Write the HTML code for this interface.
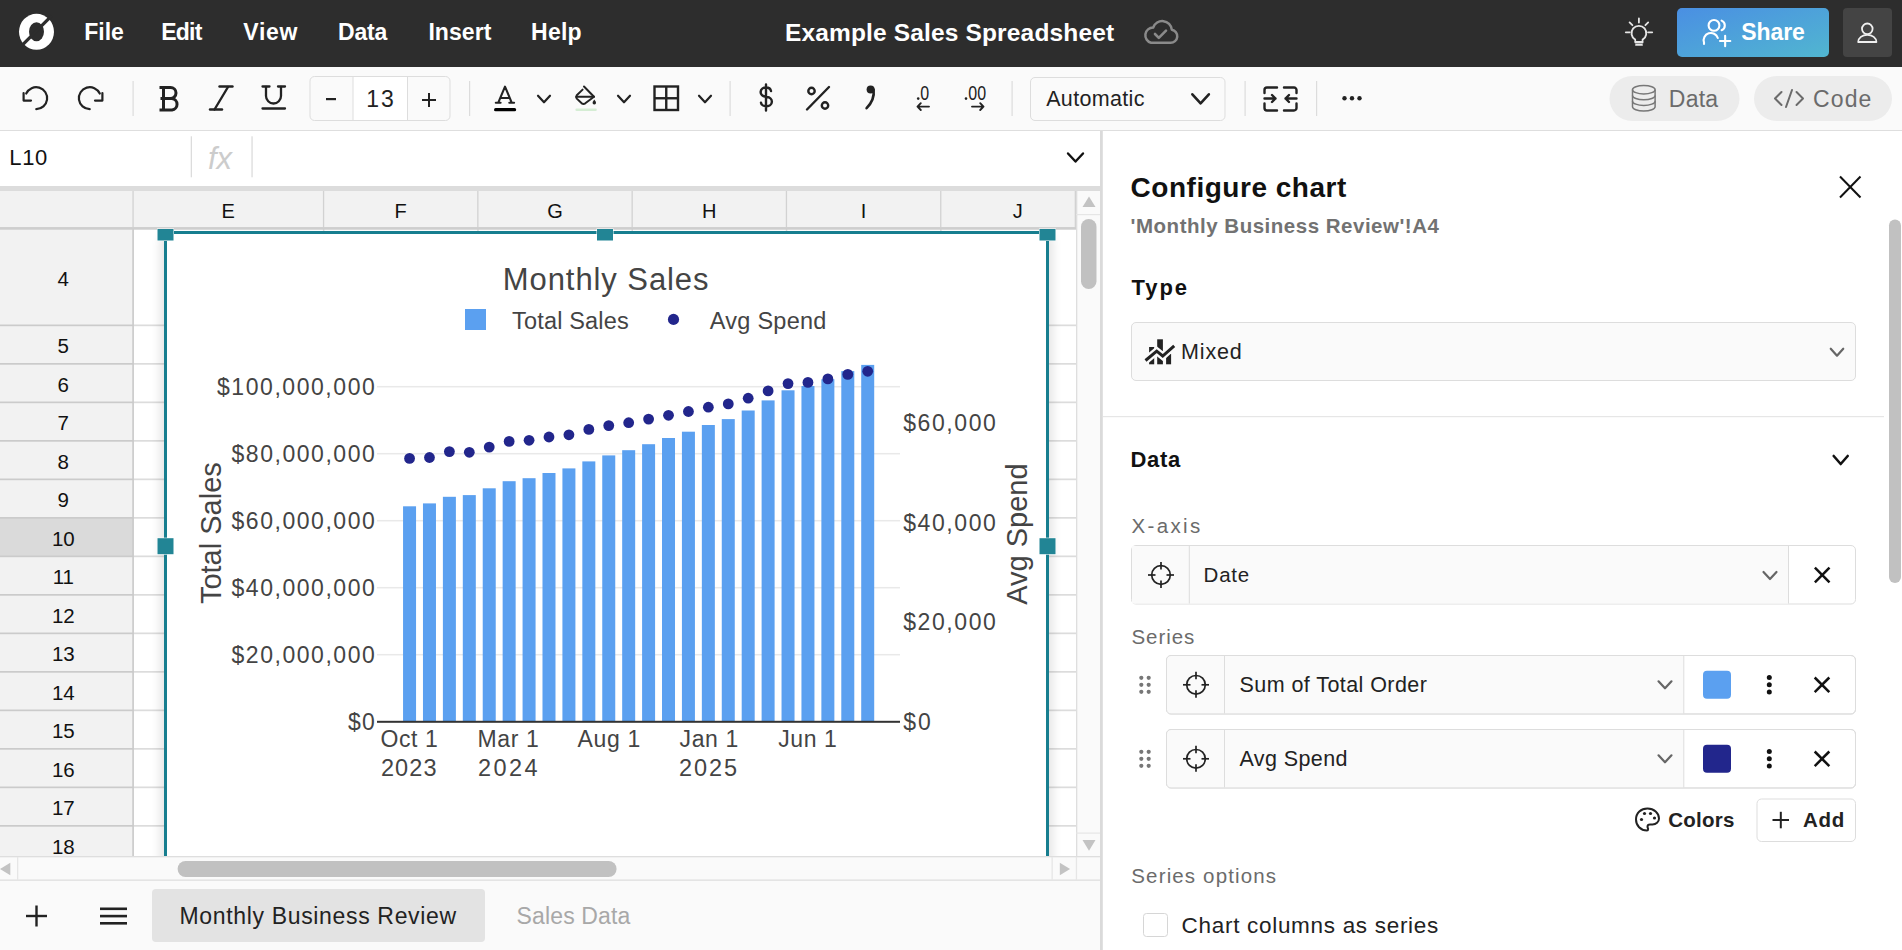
<!DOCTYPE html>
<html><head><meta charset="utf-8"><title>Example Sales Spreadsheet</title>
<style>
html,body{margin:0;padding:0;width:1902px;height:950px;overflow:hidden;background:#fff;}
svg{display:block;font-family:"Liberation Sans",sans-serif;}
</style></head><body>
<svg width="1902" height="950" viewBox="0 0 1902 950">
<rect x="0" y="0" width="1902" height="67" fill="#2d2d2d"/>
<g transform="translate(36.5,31.8)"><ellipse cx="0" cy="0" rx="17.5" ry="18" fill="#fff"/><ellipse cx="0" cy="0" rx="7.5" ry="9.5" fill="#2d2d2d"/><line x1="-14" y1="13" x2="15" y2="-16" stroke="#2d2d2d" stroke-width="3.2"/></g>
<path d="M1151,42.8 h19.5 a6.6,6.6 0 0 0 1.3,-13.1 a9.6,9.6 0 0 0 -18.6,-2.2 a7.8,7.8 0 0 0 -2.2,15.3 z" fill="none" stroke="#8a8a8a" stroke-width="2.5" stroke-linejoin="round"/><path d="M1155,34 l3.8,3.8 l7.2,-7.2" fill="none" stroke="#8a8a8a" stroke-width="2.6" stroke-linecap="round" stroke-linejoin="round"/>
<g fill="none" stroke="#e6e6e6" stroke-width="1.8" stroke-linecap="round"><path d="M1635.2,39.6 a7.4,7.4 0 1 1 7.4,0 v2.2 h-7.4 z" stroke-linejoin="round"/><line x1="1635.5" y1="42.6" x2="1642.5" y2="42.6"/><line x1="1636" y1="44.9" x2="1642" y2="44.9"/><line x1="1638.9" y1="18.5" x2="1638.9" y2="22.5"/><line x1="1625.8" y1="32.3" x2="1629.8" y2="32.3"/><line x1="1648" y1="32.3" x2="1652.2" y2="32.3"/><line x1="1629.6" y1="22.4" x2="1632.4" y2="25.2"/><line x1="1648.2" y1="22.4" x2="1645.4" y2="25.2"/></g>
<defs><linearGradient id="sg" x1="0" y1="0" x2="1" y2="1"><stop offset="0" stop-color="#4a8fe3"/><stop offset="1" stop-color="#51b6d0"/></linearGradient></defs>
<rect x="1677" y="8" width="152" height="49" rx="5" fill="url(#sg)"/>
<g fill="none" stroke="#fff" stroke-width="2.1" stroke-linecap="round"><circle cx="1714" cy="25.4" r="5.4"/><path d="M1704,44 v-1.5 a7.2,7.2 0 0 1 13.8,-4.5"/><path d="M1721.6,20.6 a5.2,5.2 0 0 1 0,9.6"/><line x1="1720" y1="41" x2="1730.3" y2="41"/><line x1="1725.15" y1="35.8" x2="1725.15" y2="46.2"/></g>
<rect x="1843" y="8" width="49" height="49" rx="4" fill="#444444"/>
<g fill="none" stroke="#f0f0f0" stroke-width="1.8"><circle cx="1867.3" cy="28.8" r="5.3"/><path d="M1858.2,42 a9.1,7.2 0 0 1 18.2,0 z" stroke-linejoin="round"/></g>
<rect x="0" y="67" width="1902" height="63.5" fill="#fafafa"/>
<rect x="0" y="130" width="1902" height="1" fill="#dedede"/>
<g fill="none" stroke="#222222" stroke-width="2.2" stroke-linecap="round" stroke-linejoin="round"><path d="M26.2,93.5 A11,11 0 1 1 36.3,109.2"/><path d="M23.6,93 L23.6,100.6 L31,100.6"/><path d="M99.8,93.5 A11,11 0 1 0 89.7,109.2"/><path d="M102.4,93 L102.4,100.6 L95,100.6"/></g>
<rect x="132.5" y="81" width="1.2" height="35" fill="#dcdcdc"/>
<path d="M160.5,87.5 h10 a5.5,5.5 0 0 1 0,11 h-10 M160.5,98.5 h11.5 a5.8,5.8 0 0 1 0,11.5 h-11.5 M163.5,87.5 v22.5 M159.5,87.5 h4 M159.5,110 h4" fill="none" stroke="#222222" stroke-width="3" stroke-linejoin="round"/>
<g fill="none" stroke="#222222" stroke-width="2.4" stroke-linecap="round"><line x1="228" y1="87" x2="214.5" y2="109.5"/><line x1="219.5" y1="86.5" x2="232.5" y2="86.5"/><line x1="210" y1="109.5" x2="222" y2="109.5"/></g>
<g fill="none" stroke="#222222" stroke-width="2.3" stroke-linecap="round"><path d="M266,87 v9 a7.5,7.5 0 0 0 15,0 v-9"/><line x1="262.5" y1="86.5" x2="269.5" y2="86.5"/><line x1="278" y1="86.5" x2="285" y2="86.5"/><line x1="262.5" y1="108.5" x2="285" y2="108.5"/></g>
<rect x="310" y="76.5" width="140" height="44" rx="4.5" fill="#fafafa" stroke="#dddddd" stroke-width="1"/>
<rect x="353" y="77" width="54.5" height="43" fill="#ffffff"/>
<rect x="352.5" y="77" width="1" height="43" fill="#dddddd"/><rect x="407" y="77" width="1" height="43" fill="#dddddd"/>
<rect x="326" y="98" width="10" height="2.2" fill="#222222"/>
<rect x="422" y="99" width="14" height="2" fill="#222222"/><rect x="428" y="93" width="2" height="14" fill="#222222"/>
<rect x="469" y="81" width="1.2" height="35" fill="#dcdcdc"/>
<path d="M498.4,102.3 L505,86.6 L511.6,102.3 M501.6,98 h7 M495.8,102.8 h4.8 M509.3,102.8 h4.8" fill="none" stroke="#222222" stroke-width="2.1" stroke-linecap="round" stroke-linejoin="round"/>
<rect x="494" y="108" width="22.2" height="3.3" rx="1.65" fill="#000"/>
<path d="M538.0,95.75 L544,102.25 L550.0,95.75" fill="none" stroke="#222222" stroke-width="2.2" stroke-linecap="round" stroke-linejoin="round"/>
<g fill="none" stroke="#222222" stroke-width="2" stroke-linejoin="round" stroke-linecap="round"><path d="M584,86.5 L594,96.7 L585.3,103.3 Q583.5,104.5 581.7,103.3 L576.8,98.6 Q575.6,96.8 576.8,95.2 L582.6,89.6"/><path d="M576.5,96.7 H594"/></g><path d="M594.3,99.6 q-2.2,2.6 -1.6,3.8 a1.8,1.8 0 0 0 3.2,0 q0.6,-1.2 -1.6,-3.8 z" fill="#222222"/>
<rect x="575.4" y="108.4" width="21.4" height="2.6" rx="1.3" fill="#d5edd4"/>
<path d="M618.0,95.75 L624,102.25 L630.0,95.75" fill="none" stroke="#222222" stroke-width="2.2" stroke-linecap="round" stroke-linejoin="round"/>
<g fill="none" stroke="#222222" stroke-width="2.4"><rect x="654.5" y="86.5" width="23.5" height="23.5"/><line x1="666.25" y1="86.5" x2="666.25" y2="110"/><line x1="654.5" y1="98.25" x2="678" y2="98.25"/></g>
<path d="M699.0,95.75 L705,102.25 L711.0,95.75" fill="none" stroke="#222222" stroke-width="2.2" stroke-linecap="round" stroke-linejoin="round"/>
<rect x="729.5" y="81" width="1.2" height="35" fill="#dcdcdc"/>
<path d="M771,91 a5,4.2 0 0 0 -5,-3.5 a5,4.5 0 0 0 -0.5,9.2 l1.5,0.3 a5,4.5 0 0 1 -0.5,9.2 a5,4 0 0 1 -5.5,-3.5 M766,84.5 v26" fill="none" stroke="#222222" stroke-width="2.4" stroke-linecap="round"/>
<g fill="none" stroke="#222222" stroke-width="2.4" stroke-linecap="round"><line x1="829" y1="87" x2="807" y2="109.5"/><circle cx="811.5" cy="91" r="3.2"/><circle cx="825" cy="105.5" r="3.2"/></g>
<circle cx="870.6" cy="89.6" r="4" fill="#222222"/><path d="M873.6,89.6 q1.3,10 -7,18.6" fill="none" stroke="#222222" stroke-width="2.6" stroke-linecap="round"/>
<circle cx="918.2" cy="98.6" r="1.3" fill="#222222"/>
<g fill="none" stroke="#222222" stroke-width="1.9" stroke-linecap="round" stroke-linejoin="round"><path d="M929,106.6 h-11.5 M920.8,103.2 l-3.3,3.4 l3.3,3.4"/></g>
<circle cx="966" cy="98.6" r="1.3" fill="#222222"/>
<g fill="none" stroke="#222222" stroke-width="1.9" stroke-linecap="round" stroke-linejoin="round"><path d="M972,106.6 h11.5 M980.2,103.2 l3.3,3.4 l-3.3,3.4"/></g>
<rect x="1011.5" y="81" width="1.2" height="35" fill="#dcdcdc"/>
<rect x="1030.5" y="77.5" width="194.5" height="43" rx="4.5" fill="#fafafa" stroke="#dddddd" stroke-width="1"/>
<path d="M1192.35,94.3 L1200.6,103.3 L1208.85,94.3" fill="none" stroke="#222222" stroke-width="2.6" stroke-linecap="round" stroke-linejoin="round"/>
<rect x="1244.5" y="81" width="1.2" height="35" fill="#dcdcdc"/>
<g fill="none" stroke="#222222" stroke-width="2.4" stroke-linecap="round" stroke-linejoin="round"><path d="M1264.5,93 v-3 a2.5,2.5 0 0 1 2.5,-2.5 h10 M1264.5,103.5 v4.5 a2.5,2.5 0 0 0 2.5,2.5 h10"/><path d="M1296.5,93 v-3 a2.5,2.5 0 0 0 -2.5,-2.5 h-10 M1296.5,103.5 v4.5 a2.5,2.5 0 0 1 -2.5,2.5 h-10"/><path d="M1264.5,98.5 h11 M1272,95 l3.5,3.5 l-3.5,3.5"/><path d="M1296.5,98.5 h-11 M1289,95 l-3.5,3.5 l3.5,3.5"/></g>
<rect x="1316" y="81" width="1.2" height="35" fill="#dcdcdc"/>
<g fill="#222222"><circle cx="1344.5" cy="98.2" r="2.2"/><circle cx="1352" cy="98.2" r="2.2"/><circle cx="1359.5" cy="98.2" r="2.2"/></g>
<rect x="1609.5" y="76" width="130" height="45" rx="22.5" fill="#ececec"/>
<rect x="1754" y="76" width="138" height="45" rx="22.5" fill="#ececec"/>
<g fill="none" stroke="#777" stroke-width="1.5"><ellipse cx="1643.8" cy="89.7" rx="11.3" ry="4.2"/><path d="M1632.5,89.7 v17 a11.3,4.4 0 0 0 22.6,0 v-17"/><path d="M1632.5,95.5 a11.3,4.2 0 0 0 22.6,0"/><path d="M1632.5,101.2 a11.3,4.2 0 0 0 22.6,0"/></g>
<g fill="none" stroke="#6b6b6b" stroke-width="2" stroke-linecap="round" stroke-linejoin="round"><path d="M1781.5,92 l-6.5,6.5 l6.5,6.5"/><path d="M1796.5,92 l6.5,6.5 l-6.5,6.5"/><line x1="1792" y1="90" x2="1786" y2="107"/></g>
<rect x="0" y="131" width="1100" height="55" fill="#ffffff"/>
<rect x="190.7" y="136.3" width="1.3" height="41" fill="#dcdcdc"/><rect x="251.4" y="136.3" width="1.3" height="41" fill="#dcdcdc"/>
<path d="M1068.0,153.5 L1075.5,161.5 L1083.0,153.5" fill="none" stroke="#111" stroke-width="2.4" stroke-linecap="round" stroke-linejoin="round"/>
<rect x="0" y="186" width="1100" height="5" fill="#dcdcdc"/>
<rect x="0" y="191" width="1077" height="38" fill="#f2f2f2"/>
<rect x="0" y="227.3" width="1077" height="2.4" fill="#cecece"/>
<rect x="132.4" y="191" width="1.3" height="38" fill="#d2d2d2"/>
<rect x="322.9" y="191" width="1.3" height="38" fill="#d2d2d2"/>
<rect x="477.2" y="191" width="1.3" height="38" fill="#d2d2d2"/>
<rect x="631.5" y="191" width="1.3" height="38" fill="#d2d2d2"/>
<rect x="785.8" y="191" width="1.3" height="38" fill="#d2d2d2"/>
<rect x="940.1" y="191" width="1.3" height="38" fill="#d2d2d2"/>
<rect x="1074.7" y="191" width="1.3" height="38" fill="#d2d2d2"/>
<rect x="0" y="229" width="133" height="627" fill="#f2f2f2"/>
<rect x="133.5" y="229" width="943" height="627" fill="#ffffff"/>
<rect x="0" y="517.5" width="133" height="38.5" fill="#dadada"/>
<rect x="0" y="324.5" width="133" height="1.7" fill="#cbcbcb"/>
<rect x="133" y="324.5" width="943" height="1.7" fill="#dcdcdc"/>
<rect x="0" y="363.0" width="133" height="1.7" fill="#cbcbcb"/>
<rect x="133" y="363.0" width="943" height="1.7" fill="#dcdcdc"/>
<rect x="0" y="401.5" width="133" height="1.7" fill="#cbcbcb"/>
<rect x="133" y="401.5" width="943" height="1.7" fill="#dcdcdc"/>
<rect x="0" y="440.0" width="133" height="1.7" fill="#cbcbcb"/>
<rect x="133" y="440.0" width="943" height="1.7" fill="#dcdcdc"/>
<rect x="0" y="478.5" width="133" height="1.7" fill="#cbcbcb"/>
<rect x="133" y="478.5" width="943" height="1.7" fill="#dcdcdc"/>
<rect x="0" y="517.0" width="133" height="1.7" fill="#cbcbcb"/>
<rect x="133" y="517.0" width="943" height="1.7" fill="#dcdcdc"/>
<rect x="0" y="555.5" width="133" height="1.7" fill="#cbcbcb"/>
<rect x="133" y="555.5" width="943" height="1.7" fill="#dcdcdc"/>
<rect x="0" y="594.0" width="133" height="1.7" fill="#cbcbcb"/>
<rect x="133" y="594.0" width="943" height="1.7" fill="#dcdcdc"/>
<rect x="0" y="632.5" width="133" height="1.7" fill="#cbcbcb"/>
<rect x="133" y="632.5" width="943" height="1.7" fill="#dcdcdc"/>
<rect x="0" y="671.0" width="133" height="1.7" fill="#cbcbcb"/>
<rect x="133" y="671.0" width="943" height="1.7" fill="#dcdcdc"/>
<rect x="0" y="709.5" width="133" height="1.7" fill="#cbcbcb"/>
<rect x="133" y="709.5" width="943" height="1.7" fill="#dcdcdc"/>
<rect x="0" y="748.0" width="133" height="1.7" fill="#cbcbcb"/>
<rect x="133" y="748.0" width="943" height="1.7" fill="#dcdcdc"/>
<rect x="0" y="786.5" width="133" height="1.7" fill="#cbcbcb"/>
<rect x="133" y="786.5" width="943" height="1.7" fill="#dcdcdc"/>
<rect x="0" y="825.0" width="133" height="1.7" fill="#cbcbcb"/>
<rect x="133" y="825.0" width="943" height="1.7" fill="#dcdcdc"/>
<rect x="132.3" y="229" width="1.6" height="627" fill="#c9c9c9"/>
<rect x="322.9" y="229" width="1.5" height="627" fill="#dcdcdc"/>
<rect x="477.2" y="229" width="1.5" height="627" fill="#dcdcdc"/>
<rect x="631.5" y="229" width="1.5" height="627" fill="#dcdcdc"/>
<rect x="785.8" y="229" width="1.5" height="627" fill="#dcdcdc"/>
<rect x="940.1" y="229" width="1.5" height="627" fill="#dcdcdc"/>
<rect x="0" y="227.3" width="1076" height="2.4" fill="#cecece"/>
<rect x="1076" y="191" width="24" height="666" fill="#fafafa"/>
<rect x="1076" y="191" width="1.3" height="666" fill="#dedede"/>
<rect x="1076" y="214" width="24" height="1.2" fill="#e6e6e6"/><rect x="1076" y="832.5" width="24" height="1.2" fill="#e6e6e6"/>
<path d="M1082.5,207 h13 l-6.5,-10.5 z" fill="#c3c3c3"/><path d="M1082.5,840 h13 l-6.5,10.8 z" fill="#c3c3c3"/>
<rect x="1081" y="219" width="15.5" height="70" rx="7.75" fill="#c1c1c1"/>
<rect x="0" y="856.5" width="1100" height="24" fill="#fafafa"/>
<rect x="0" y="856" width="1100" height="1.3" fill="#dedede"/><rect x="0" y="879.5" width="1100" height="1.3" fill="#dedede"/>
<rect x="17" y="857" width="1.3" height="23" fill="#e6e6e6"/><rect x="1051.5" y="857" width="1.3" height="23" fill="#e6e6e6"/><rect x="1075.8" y="857" width="1.3" height="23" fill="#e6e6e6"/>
<path d="M10.3,862.8 v12.4 l-10.3,-6.2 z" fill="#c3c3c3"/><path d="M1059.8,862.8 v12.4 l10.3,-6.2 z" fill="#c3c3c3"/>
<rect x="177.6" y="861" width="439" height="16" rx="8" fill="#c1c1c1"/>
<rect x="322.9" y="853" width="1.3" height="3" fill="#e2e2e2"/>
<rect x="477.2" y="853" width="1.3" height="3" fill="#e2e2e2"/>
<rect x="631.5" y="853" width="1.3" height="3" fill="#e2e2e2"/>
<rect x="785.8" y="853" width="1.3" height="3" fill="#e2e2e2"/>
<rect x="940.1" y="853" width="1.3" height="3" fill="#e2e2e2"/>
<rect x="0" y="881" width="1100" height="69" fill="#fafafa"/>
<g fill="#222"><rect x="26" y="914.8" width="21" height="2.4"/><rect x="35.3" y="905.5" width="2.4" height="21"/></g>
<g fill="#222"><rect x="100" y="907.5" width="27" height="2.6"/><rect x="100" y="914.8" width="27" height="2.6"/><rect x="100" y="922" width="27" height="2.6"/></g>
<rect x="152" y="889" width="333" height="53" rx="4" fill="#e3e3e3"/>
<defs><filter id="csh" x="-5%" y="-5%" width="110%" height="110%"><feGaussianBlur stdDeviation="5"/></filter><clipPath id="gridclip"><rect x="133.5" y="229" width="942" height="627"/></clipPath></defs>
<g clip-path="url(#gridclip)">
<rect x="160" y="236" width="893" height="640" fill="#000" opacity="0.10" filter="url(#csh)"/>
<rect x="164" y="231" width="885" height="640" fill="#ffffff"/>
<rect x="165.5" y="232.5" width="882" height="640" fill="none" stroke="#177e8f" stroke-width="3"/>
</g>
<rect x="377" y="385.95" width="523" height="1.5" fill="#e9e9e9"/>
<rect x="377" y="452.95" width="523" height="1.5" fill="#e9e9e9"/>
<rect x="377" y="519.95" width="523" height="1.5" fill="#e9e9e9"/>
<rect x="377" y="586.95" width="523" height="1.5" fill="#e9e9e9"/>
<rect x="377" y="653.95" width="523" height="1.5" fill="#e9e9e9"/>
<rect x="403.05" y="506.3" width="13" height="215.50" fill="#5ba0f0"/>
<rect x="422.97" y="503.4" width="13" height="218.40" fill="#5ba0f0"/>
<rect x="442.89" y="496.8" width="13" height="225.00" fill="#5ba0f0"/>
<rect x="462.81" y="495.1" width="13" height="226.70" fill="#5ba0f0"/>
<rect x="482.73" y="488.3" width="13" height="233.50" fill="#5ba0f0"/>
<rect x="502.65" y="481.2" width="13" height="240.60" fill="#5ba0f0"/>
<rect x="522.57" y="478.2" width="13" height="243.60" fill="#5ba0f0"/>
<rect x="542.49" y="473.0" width="13" height="248.80" fill="#5ba0f0"/>
<rect x="562.41" y="468.4" width="13" height="253.40" fill="#5ba0f0"/>
<rect x="582.33" y="461.4" width="13" height="260.40" fill="#5ba0f0"/>
<rect x="602.25" y="455.4" width="13" height="266.40" fill="#5ba0f0"/>
<rect x="622.17" y="450.2" width="13" height="271.60" fill="#5ba0f0"/>
<rect x="642.09" y="444.2" width="13" height="277.60" fill="#5ba0f0"/>
<rect x="662.01" y="438.0" width="13" height="283.80" fill="#5ba0f0"/>
<rect x="681.93" y="431.7" width="13" height="290.10" fill="#5ba0f0"/>
<rect x="701.85" y="425.0" width="13" height="296.80" fill="#5ba0f0"/>
<rect x="721.77" y="419.1" width="13" height="302.70" fill="#5ba0f0"/>
<rect x="741.69" y="410.5" width="13" height="311.30" fill="#5ba0f0"/>
<rect x="761.61" y="400.4" width="13" height="321.40" fill="#5ba0f0"/>
<rect x="781.53" y="390.3" width="13" height="331.50" fill="#5ba0f0"/>
<rect x="801.45" y="386.0" width="13" height="335.80" fill="#5ba0f0"/>
<rect x="821.37" y="379.2" width="13" height="342.60" fill="#5ba0f0"/>
<rect x="841.29" y="371.1" width="13" height="350.70" fill="#5ba0f0"/>
<rect x="861.21" y="364.9" width="13" height="356.90" fill="#5ba0f0"/>
<rect x="377" y="720.8" width="523" height="2" fill="#333333"/>
<circle cx="409.55" cy="458.4" r="5.4" fill="#22268c"/>
<circle cx="429.47" cy="457.5" r="5.4" fill="#22268c"/>
<circle cx="449.39" cy="451.6" r="5.4" fill="#22268c"/>
<circle cx="469.31" cy="452.3" r="5.4" fill="#22268c"/>
<circle cx="489.23" cy="447.1" r="5.4" fill="#22268c"/>
<circle cx="509.15" cy="441.4" r="5.4" fill="#22268c"/>
<circle cx="529.07" cy="440.3" r="5.4" fill="#22268c"/>
<circle cx="548.99" cy="437.0" r="5.4" fill="#22268c"/>
<circle cx="568.91" cy="434.8" r="5.4" fill="#22268c"/>
<circle cx="588.83" cy="429.4" r="5.4" fill="#22268c"/>
<circle cx="608.75" cy="425.6" r="5.4" fill="#22268c"/>
<circle cx="628.67" cy="422.7" r="5.4" fill="#22268c"/>
<circle cx="648.59" cy="419.1" r="5.4" fill="#22268c"/>
<circle cx="668.51" cy="415.3" r="5.4" fill="#22268c"/>
<circle cx="688.43" cy="411.5" r="5.4" fill="#22268c"/>
<circle cx="708.35" cy="407.2" r="5.4" fill="#22268c"/>
<circle cx="728.27" cy="403.9" r="5.4" fill="#22268c"/>
<circle cx="748.19" cy="398.2" r="5.4" fill="#22268c"/>
<circle cx="768.11" cy="390.9" r="5.4" fill="#22268c"/>
<circle cx="788.03" cy="383.6" r="5.4" fill="#22268c"/>
<circle cx="807.95" cy="382.4" r="5.4" fill="#22268c"/>
<circle cx="827.87" cy="378.9" r="5.4" fill="#22268c"/>
<circle cx="847.79" cy="374.4" r="5.4" fill="#22268c"/>
<circle cx="867.71" cy="371.3" r="5.4" fill="#22268c"/>
<rect x="465" y="309" width="21" height="21" fill="#5ba0f0"/>
<circle cx="673.5" cy="319.4" r="5.6" fill="#22268c"/>
<rect x="157.0" y="228.5" width="17" height="12.5" fill="#ffffff"/>
<rect x="157.5" y="229" width="16" height="11.5" fill="#228595"/>
<rect x="596.5" y="228.5" width="17" height="12.5" fill="#ffffff"/>
<rect x="597" y="229" width="16" height="11.5" fill="#228595"/>
<rect x="1039.0" y="228.5" width="17" height="12.5" fill="#ffffff"/>
<rect x="1039.5" y="229" width="16" height="11.5" fill="#228595"/>
<rect x="157.0" y="537.7" width="17" height="17.0" fill="#ffffff"/>
<rect x="157.5" y="538.2" width="16" height="16.0" fill="#228595"/>
<rect x="1039.0" y="537.7" width="17" height="17.0" fill="#ffffff"/>
<rect x="1039.5" y="538.2" width="16" height="16.0" fill="#228595"/>
<rect x="1100" y="131" width="802" height="819" fill="#ffffff"/>
<rect x="1100" y="131" width="2.8" height="819" fill="#dadada"/>
<g stroke="#111" stroke-width="2" stroke-linecap="butt"><line x1="1840" y1="176.5" x2="1860.5" y2="197.5"/><line x1="1860.5" y1="176.5" x2="1840" y2="197.5"/></g>
<rect x="1889" y="219.5" width="12" height="363.5" rx="6" fill="#c1c1c1"/>
<rect x="1131.5" y="322.5" width="724" height="58" rx="4.5" fill="#fafafa" stroke="#dddddd" stroke-width="1"/>
<g fill="#222"><rect x="1149.1" y="347" width="5.1" height="17.3"/><rect x="1157.2" y="339.3" width="5.7" height="25"/><rect x="1166.1" y="353.9" width="5" height="10.4"/></g><path d="M1145.5,360.5 L1156.7,351.2 L1162.7,356 L1174.2,345.8" fill="none" stroke="#fafafa" stroke-width="7.5" stroke-linejoin="miter"/><path d="M1145.5,360.5 L1156.7,351.2 L1162.7,356 L1174.2,345.8" fill="none" stroke="#222" stroke-width="3" stroke-linejoin="miter"/>
<path d="M1830.75,348.7 L1837,355.7 L1843.25,348.7" fill="none" stroke="#666" stroke-width="2.2" stroke-linecap="round" stroke-linejoin="round"/>
<rect x="1103" y="416" width="781" height="1.2" fill="#e6e6e6"/>
<path d="M1833.7,456.0 L1840.7,464.0 L1847.7,456.0" fill="none" stroke="#111" stroke-width="2.6" stroke-linecap="round" stroke-linejoin="round"/>
<rect x="1131.5" y="545.5" width="724" height="58.5" rx="4.5" fill="#ffffff" stroke="#dddddd" stroke-width="1"/>
<rect x="1132" y="546" width="656" height="57.5" fill="#fafafa"/>
<path d="M1136,546 h-0 a4,4 0 0 0 -4,4 v49.5 a4,4 0 0 0 4,4 z" fill="#fafafa"/>
<rect x="1188.8" y="546" width="1" height="57.5" fill="#dddddd"/><rect x="1788" y="546" width="1" height="57.5" fill="#dddddd"/>
<g fill="none" stroke="#222" stroke-width="1.7"><circle cx="1161" cy="575" r="9.3"/><line x1="1161" y1="562" x2="1161" y2="569.5"/><line x1="1161" y1="580.5" x2="1161" y2="588"/><line x1="1148" y1="575" x2="1155.5" y2="575"/><line x1="1166.5" y1="575" x2="1174" y2="575"/></g>
<path d="M1763.5,572.0 L1770,579.0 L1776.5,572.0" fill="none" stroke="#666" stroke-width="2.2" stroke-linecap="round" stroke-linejoin="round"/>
<g stroke="#111" stroke-width="2.5"><line x1="1814.9" y1="567.7" x2="1829.5" y2="582.3"/><line x1="1829.5" y1="567.7" x2="1814.9" y2="582.3"/></g>
<rect x="1166.5" y="655.5" width="689" height="58.5" rx="4.5" fill="#ffffff" stroke="#dddddd" stroke-width="1"/>
<rect x="1167" y="656.0" width="516.5" height="57.5" fill="#fafafa"/>
<rect x="1224" y="656.0" width="1" height="57.5" fill="#dddddd"/><rect x="1683.3" y="656.0" width="1" height="57.5" fill="#dddddd"/>
<rect x="1166.5" y="655.5" width="689" height="58.5" rx="4.5" fill="none" stroke="#dddddd" stroke-width="1"/>
<g fill="#777"><circle cx="1141.3" cy="677.8" r="2.1"/><circle cx="1141.3" cy="684.8" r="2.1"/><circle cx="1141.3" cy="691.8" r="2.1"/><circle cx="1148.7" cy="677.8" r="2.1"/><circle cx="1148.7" cy="684.8" r="2.1"/><circle cx="1148.7" cy="691.8" r="2.1"/></g>
<g fill="none" stroke="#222" stroke-width="1.7"><circle cx="1196" cy="684.8" r="9.3"/><line x1="1196" y1="671.8" x2="1196" y2="679.3"/><line x1="1196" y1="690.3" x2="1196" y2="697.8"/><line x1="1183" y1="684.8" x2="1190.5" y2="684.8"/><line x1="1201.5" y1="684.8" x2="1209" y2="684.8"/></g>
<path d="M1658.5,681.3 L1665,688.3 L1671.5,681.3" fill="none" stroke="#666" stroke-width="2.2" stroke-linecap="round" stroke-linejoin="round"/>
<rect x="1703" y="670.8" width="28" height="28" rx="4" fill="#5ba0f0"/>
<g fill="#111"><circle cx="1769.3" cy="677.5999999999999" r="2.5"/><circle cx="1769.3" cy="684.8" r="2.5"/><circle cx="1769.3" cy="692.0" r="2.5"/></g>
<g stroke="#111" stroke-width="2.5"><line x1="1814.7" y1="677.5" x2="1829.3" y2="692.0999999999999"/><line x1="1829.3" y1="677.5" x2="1814.7" y2="692.0999999999999"/></g>
<rect x="1166.5" y="729.5" width="689" height="58.5" rx="4.5" fill="#ffffff" stroke="#dddddd" stroke-width="1"/>
<rect x="1167" y="730.0" width="516.5" height="57.5" fill="#fafafa"/>
<rect x="1224" y="730.0" width="1" height="57.5" fill="#dddddd"/><rect x="1683.3" y="730.0" width="1" height="57.5" fill="#dddddd"/>
<rect x="1166.5" y="729.5" width="689" height="58.5" rx="4.5" fill="none" stroke="#dddddd" stroke-width="1"/>
<g fill="#777"><circle cx="1141.3" cy="751.8" r="2.1"/><circle cx="1141.3" cy="758.8" r="2.1"/><circle cx="1141.3" cy="765.8" r="2.1"/><circle cx="1148.7" cy="751.8" r="2.1"/><circle cx="1148.7" cy="758.8" r="2.1"/><circle cx="1148.7" cy="765.8" r="2.1"/></g>
<g fill="none" stroke="#222" stroke-width="1.7"><circle cx="1196" cy="758.8" r="9.3"/><line x1="1196" y1="745.8" x2="1196" y2="753.3"/><line x1="1196" y1="764.3" x2="1196" y2="771.8"/><line x1="1183" y1="758.8" x2="1190.5" y2="758.8"/><line x1="1201.5" y1="758.8" x2="1209" y2="758.8"/></g>
<path d="M1658.5,755.3 L1665,762.3 L1671.5,755.3" fill="none" stroke="#666" stroke-width="2.2" stroke-linecap="round" stroke-linejoin="round"/>
<rect x="1703" y="744.8" width="28" height="28" rx="4" fill="#22268c"/>
<g fill="#111"><circle cx="1769.3" cy="751.5999999999999" r="2.5"/><circle cx="1769.3" cy="758.8" r="2.5"/><circle cx="1769.3" cy="766.0" r="2.5"/></g>
<g stroke="#111" stroke-width="2.5"><line x1="1814.7" y1="751.5" x2="1829.3" y2="766.0999999999999"/><line x1="1829.3" y1="751.5" x2="1814.7" y2="766.0999999999999"/></g>
<g fill="none" stroke="#222" stroke-width="2"><path d="M1647,830.5 c-6.5,0 -11,-5 -11,-11 c0,-6.5 5,-11 11.5,-11 c6.5,0 11.5,4.5 11.5,10 c0,3.5 -3,6 -6.5,6 h-2.5 c-1.5,0 -2.5,1 -2.5,2.3 c0,0.8 0.6,1.3 0.6,2.2 c0,1 -0.8,1.5 -1.1,1.5 z" stroke-linejoin="round"/></g><g fill="#222"><circle cx="1641.5" cy="819.5" r="1.6"/><circle cx="1644.5" cy="813.5" r="1.6"/><circle cx="1650.5" cy="813.5" r="1.6"/><circle cx="1654.5" cy="818" r="1.6"/></g>
<rect x="1757" y="799" width="98.5" height="42.5" rx="4.5" fill="#ffffff" stroke="#dddddd" stroke-width="1"/>
<g fill="#222"><rect x="1772.5" y="819" width="16.5" height="2"/><rect x="1779.8" y="811.8" width="2" height="16.5"/></g>
<rect x="1143.5" y="913.5" width="24" height="23" rx="3" fill="#ffffff" stroke="#d6d6d6" stroke-width="1"/>
<text x="84.20" y="40.00" style="font-size:23px;font-weight:700" fill="#ffffff" textLength="39.69" lengthAdjust="spacing" >File</text>
<text x="161.20" y="40.00" style="font-size:23px;font-weight:700" fill="#ffffff" textLength="41.16" lengthAdjust="spacing" >Edit</text>
<text x="243.30" y="40.00" style="font-size:23px;font-weight:700" fill="#ffffff" textLength="53.99" lengthAdjust="spacing" >View</text>
<text x="337.90" y="40.00" style="font-size:23px;font-weight:700" fill="#ffffff" textLength="49.49" lengthAdjust="spacing" >Data</text>
<text x="428.40" y="40.00" style="font-size:23px;font-weight:700" fill="#ffffff" textLength="62.96" lengthAdjust="spacing" >Insert</text>
<text x="531.00" y="40.00" style="font-size:23px;font-weight:700" fill="#ffffff" textLength="50.65" lengthAdjust="spacing" >Help</text>
<text x="784.90" y="41.10" style="font-size:24.5px;font-weight:700" fill="#ffffff" textLength="329.26" lengthAdjust="spacing" >Example Sales Spreadsheet</text>
<text x="1741.30" y="39.70" style="font-size:23px;font-weight:700" fill="#ffffff" textLength="63.49" lengthAdjust="spacing" >Share</text>
<text x="366.30" y="106.50" style="font-size:23px;font-weight:400" fill="#222" textLength="27.49" lengthAdjust="spacing" >13</text>
<text x="0.00" y="0.00" style="font-size:19.5px;font-weight:400" fill="#222" transform="translate(920.3,100) scale(0.82,1)">0</text>
<text x="0.00" y="0.00" style="font-size:19.5px;font-weight:400" fill="#222" transform="translate(968.3,100) scale(0.82,1)">00</text>
<text x="1046.20" y="106.30" style="font-size:21.5px;font-weight:400" fill="#222" textLength="98.25" lengthAdjust="spacing" >Automatic</text>
<text x="1668.80" y="107.00" style="font-size:23px;font-weight:400" fill="#6b6b6b" textLength="49.29" lengthAdjust="spacing" >Data</text>
<text x="1813.00" y="107.00" style="font-size:23px;font-weight:400" fill="#6b6b6b" textLength="58.39" lengthAdjust="spacing" >Code</text>
<text x="9.30" y="165.00" style="font-size:22px;font-weight:400" fill="#111" textLength="37.94" lengthAdjust="spacing" >L10</text>
<text x="208.00" y="168.60" style="font-size:31px;font-weight:400;font-style:italic" fill="#cccccc" >fx</text>
<text x="228.25" y="218.10" style="font-size:20px;font-weight:400" fill="#111" text-anchor="middle" >E</text>
<text x="400.65" y="218.10" style="font-size:20px;font-weight:400" fill="#111" text-anchor="middle" >F</text>
<text x="554.95" y="218.10" style="font-size:20px;font-weight:400" fill="#111" text-anchor="middle" >G</text>
<text x="709.25" y="218.10" style="font-size:20px;font-weight:400" fill="#111" text-anchor="middle" >H</text>
<text x="863.55" y="218.10" style="font-size:20px;font-weight:400" fill="#111" text-anchor="middle" >I</text>
<text x="1017.85" y="218.10" style="font-size:20px;font-weight:400" fill="#111" text-anchor="middle" >J</text>
<text x="63.30" y="285.80" style="font-size:20.5px;font-weight:400" fill="#111" text-anchor="middle" >4</text>
<text x="63.30" y="353.05" style="font-size:20.5px;font-weight:400" fill="#111" text-anchor="middle" >5</text>
<text x="63.30" y="391.55" style="font-size:20.5px;font-weight:400" fill="#111" text-anchor="middle" >6</text>
<text x="63.30" y="430.05" style="font-size:20.5px;font-weight:400" fill="#111" text-anchor="middle" >7</text>
<text x="63.30" y="468.55" style="font-size:20.5px;font-weight:400" fill="#111" text-anchor="middle" >8</text>
<text x="63.30" y="507.05" style="font-size:20.5px;font-weight:400" fill="#111" text-anchor="middle" >9</text>
<text x="63.30" y="545.55" style="font-size:20.5px;font-weight:400" fill="#111" text-anchor="middle" >10</text>
<text x="63.30" y="584.05" style="font-size:20.5px;font-weight:400" fill="#111" text-anchor="middle" >11</text>
<text x="63.30" y="622.55" style="font-size:20.5px;font-weight:400" fill="#111" text-anchor="middle" >12</text>
<text x="63.30" y="661.05" style="font-size:20.5px;font-weight:400" fill="#111" text-anchor="middle" >13</text>
<text x="63.30" y="699.55" style="font-size:20.5px;font-weight:400" fill="#111" text-anchor="middle" >14</text>
<text x="63.30" y="738.05" style="font-size:20.5px;font-weight:400" fill="#111" text-anchor="middle" >15</text>
<text x="63.30" y="776.55" style="font-size:20.5px;font-weight:400" fill="#111" text-anchor="middle" >16</text>
<text x="63.30" y="815.05" style="font-size:20.5px;font-weight:400" fill="#111" text-anchor="middle" >17</text>
<text x="63.30" y="853.55" style="font-size:20.5px;font-weight:400" fill="#111" text-anchor="middle" >18</text>
<text x="179.50" y="924.20" style="font-size:23px;font-weight:400" fill="#222" textLength="276.61" lengthAdjust="spacing" >Monthly Business Review</text>
<text x="516.50" y="924.20" style="font-size:23px;font-weight:400" fill="#a8a8a8" textLength="113.89" lengthAdjust="spacing" >Sales Data</text>
<text x="502.80" y="290.00" style="font-size:31px;font-weight:400" fill="#444444" textLength="205.70" lengthAdjust="spacing" >Monthly Sales</text>
<text x="512.00" y="329.00" style="font-size:23.5px;font-weight:400" fill="#444444" textLength="116.75" lengthAdjust="spacing" >Total Sales</text>
<text x="709.80" y="329.00" style="font-size:23.5px;font-weight:400" fill="#444444" textLength="116.57" lengthAdjust="spacing" >Avg Spend</text>
<text x="217.00" y="394.60" style="font-size:23px;font-weight:400" fill="#444444" textLength="157.79" lengthAdjust="spacing" >$100,000,000</text>
<text x="231.50" y="461.60" style="font-size:23px;font-weight:400" fill="#444444" textLength="143.29" lengthAdjust="spacing" >$80,000,000</text>
<text x="231.50" y="528.60" style="font-size:23px;font-weight:400" fill="#444444" textLength="143.29" lengthAdjust="spacing" >$60,000,000</text>
<text x="231.50" y="595.60" style="font-size:23px;font-weight:400" fill="#444444" textLength="143.29" lengthAdjust="spacing" >$40,000,000</text>
<text x="231.50" y="662.60" style="font-size:23px;font-weight:400" fill="#444444" textLength="143.29" lengthAdjust="spacing" >$20,000,000</text>
<text x="348.00" y="729.60" style="font-size:23px;font-weight:400" fill="#444444" textLength="26.79" lengthAdjust="spacing" >$0</text>
<text x="903.20" y="431.20" style="font-size:23px;font-weight:400" fill="#444444" textLength="92.59" lengthAdjust="spacing" >$60,000</text>
<text x="903.20" y="530.70" style="font-size:23px;font-weight:400" fill="#444444" textLength="92.59" lengthAdjust="spacing" >$40,000</text>
<text x="903.20" y="630.20" style="font-size:23px;font-weight:400" fill="#444444" textLength="92.59" lengthAdjust="spacing" >$20,000</text>
<text x="903.20" y="729.70" style="font-size:23px;font-weight:400" fill="#444444" textLength="27.59" lengthAdjust="spacing" >$0</text>
<text x="380.40" y="746.60" style="font-size:23px;font-weight:400" fill="#444444" textLength="57.39" lengthAdjust="spacing" >Oct 1</text>
<text x="380.90" y="775.60" style="font-size:23.5px;font-weight:400" fill="#444444" textLength="55.67" lengthAdjust="spacing" >2023</text>
<text x="477.50" y="746.60" style="font-size:23px;font-weight:400" fill="#444444" textLength="61.29" lengthAdjust="spacing" >Mar 1</text>
<text x="478.00" y="775.60" style="font-size:23.5px;font-weight:400" fill="#444444" textLength="59.57" lengthAdjust="spacing" >2024</text>
<text x="577.50" y="746.60" style="font-size:23px;font-weight:400" fill="#444444" textLength="62.79" lengthAdjust="spacing" >Aug 1</text>
<text x="679.60" y="746.60" style="font-size:23px;font-weight:400" fill="#444444" textLength="58.59" lengthAdjust="spacing" >Jan 1</text>
<text x="679.10" y="775.60" style="font-size:23.5px;font-weight:400" fill="#444444" textLength="57.87" lengthAdjust="spacing" >2025</text>
<text x="778.20" y="746.60" style="font-size:23px;font-weight:400" fill="#444444" textLength="58.59" lengthAdjust="spacing" >Jun 1</text>
<text x="0.00" y="0.00" style="font-size:29px;font-weight:400" fill="#444444" transform="translate(220.8,604.1) rotate(-90)">Total Sales</text>
<text x="0.00" y="0.00" style="font-size:29px;font-weight:400" fill="#444444" transform="translate(1026.8,604.8) rotate(-90)">Avg Spend</text>
<text x="1130.60" y="197.40" style="font-size:28px;font-weight:700" fill="#111" textLength="215.72" lengthAdjust="spacing" >Configure chart</text>
<text x="1130.60" y="232.90" style="font-size:20.5px;font-weight:700" fill="#727272" textLength="308.30" lengthAdjust="spacing" >&#x27;Monthly Business Review&#x27;!A4</text>
<text x="1131.60" y="294.70" style="font-size:22px;font-weight:700" fill="#111" textLength="55.44" lengthAdjust="spacing" >Type</text>
<text x="1181.00" y="359.00" style="font-size:21.5px;font-weight:400" fill="#222" textLength="60.76" lengthAdjust="spacing" >Mixed</text>
<text x="1130.40" y="467.20" style="font-size:22px;font-weight:700" fill="#111" textLength="49.94" lengthAdjust="spacing" >Data</text>
<text x="1131.40" y="532.80" style="font-size:20.5px;font-weight:400" fill="#6b6b6b" textLength="68.85" lengthAdjust="spacing" >X-axis</text>
<text x="1203.60" y="582.00" style="font-size:20.5px;font-weight:400" fill="#222" textLength="45.60" lengthAdjust="spacing" >Date</text>
<text x="1131.40" y="643.60" style="font-size:20.5px;font-weight:400" fill="#6b6b6b" textLength="62.85" lengthAdjust="spacing" >Series</text>
<text x="1239.50" y="692.30" style="font-size:21.5px;font-weight:400" fill="#222" textLength="187.36" lengthAdjust="spacing" >Sum of Total Order</text>
<text x="1239.50" y="766.30" style="font-size:21.5px;font-weight:400" fill="#222" textLength="107.96" lengthAdjust="spacing" >Avg Spend</text>
<text x="1668.20" y="826.80" style="font-size:20.5px;font-weight:700" fill="#222" textLength="66.10" lengthAdjust="spacing" >Colors</text>
<text x="1803.00" y="826.80" style="font-size:20.5px;font-weight:700" fill="#222" textLength="41.22" lengthAdjust="spacing" >Add</text>
<text x="1131.30" y="882.70" style="font-size:20.5px;font-weight:400" fill="#6b6b6b" textLength="144.75" lengthAdjust="spacing" >Series options</text>
<text x="1181.60" y="933.00" style="font-size:22.5px;font-weight:400" fill="#222" textLength="256.65" lengthAdjust="spacing" >Chart columns as series</text>

</svg>
</body></html>
